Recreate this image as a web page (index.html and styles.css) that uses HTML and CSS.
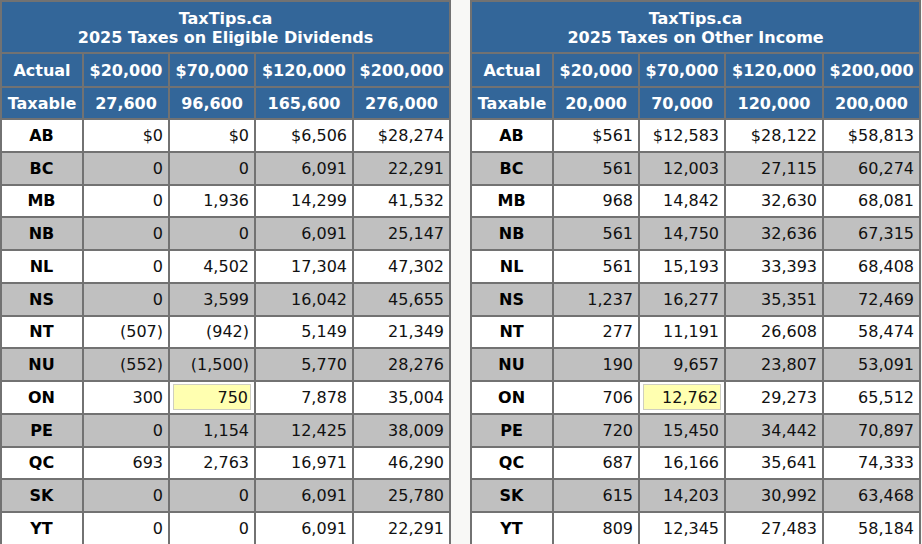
FILE: index.html
```html
<!DOCTYPE html>
<html>
<head>
<meta charset="utf-8">
<link rel="stylesheet" href="styles.css">
</head>
<body>
<div class="wrap">
<table class="tax">
<colgroup><col class="c1"><col class="c2"><col class="c3"><col class="c4"><col class="c5"></colgroup>
<tr class="title"><th colspan="5">TaxTips.ca<br>2025 Taxes on Eligible Dividends</th></tr>
<tr class="hrow r-actual"><th>Actual</th><th>$20,000</th><th>$70,000</th><th>$120,000</th><th>$200,000</th></tr>
<tr class="hrow r-taxable"><th>Taxable</th><th>27,600</th><th>96,600</th><th>165,600</th><th>276,000</th></tr>
<tr class="w"><td class="p">AB</td><td>$0</td><td>$0</td><td>$6,506</td><td>$28,274</td></tr>
<tr class="g"><td class="p">BC</td><td>0</td><td>0</td><td>6,091</td><td>22,291</td></tr>
<tr class="w"><td class="p">MB</td><td>0</td><td>1,936</td><td>14,299</td><td>41,532</td></tr>
<tr class="g"><td class="p">NB</td><td>0</td><td>0</td><td>6,091</td><td>25,147</td></tr>
<tr class="w"><td class="p">NL</td><td>0</td><td>4,502</td><td>17,304</td><td>47,302</td></tr>
<tr class="g"><td class="p">NS</td><td>0</td><td>3,599</td><td>16,042</td><td>45,655</td></tr>
<tr class="w"><td class="p">NT</td><td>(507)</td><td>(942)</td><td>5,149</td><td>21,349</td></tr>
<tr class="g"><td class="p">NU</td><td>(552)</td><td>(1,500)</td><td>5,770</td><td>28,276</td></tr>
<tr class="w"><td class="p">ON</td><td>300</td><td class="hl"><div class="mark">750</div></td><td>7,878</td><td>35,004</td></tr>
<tr class="g"><td class="p">PE</td><td>0</td><td>1,154</td><td>12,425</td><td>38,009</td></tr>
<tr class="w"><td class="p">QC</td><td>693</td><td>2,763</td><td>16,971</td><td>46,290</td></tr>
<tr class="g"><td class="p">SK</td><td>0</td><td>0</td><td>6,091</td><td>25,780</td></tr>
<tr class="w"><td class="p">YT</td><td>0</td><td>0</td><td>6,091</td><td>22,291</td></tr>
</table>
<table class="tax">
<colgroup><col class="c1"><col class="c2"><col class="c3"><col class="c4"><col class="c5"></colgroup>
<tr class="title"><th colspan="5">TaxTips.ca<br>2025 Taxes on Other Income</th></tr>
<tr class="hrow r-actual"><th>Actual</th><th>$20,000</th><th>$70,000</th><th>$120,000</th><th>$200,000</th></tr>
<tr class="hrow r-taxable"><th>Taxable</th><th>20,000</th><th>70,000</th><th>120,000</th><th>200,000</th></tr>
<tr class="w"><td class="p">AB</td><td>$561</td><td>$12,583</td><td>$28,122</td><td>$58,813</td></tr>
<tr class="g"><td class="p">BC</td><td>561</td><td>12,003</td><td>27,115</td><td>60,274</td></tr>
<tr class="w"><td class="p">MB</td><td>968</td><td>14,842</td><td>32,630</td><td>68,081</td></tr>
<tr class="g"><td class="p">NB</td><td>561</td><td>14,750</td><td>32,636</td><td>67,315</td></tr>
<tr class="w"><td class="p">NL</td><td>561</td><td>15,193</td><td>33,393</td><td>68,408</td></tr>
<tr class="g"><td class="p">NS</td><td>1,237</td><td>16,277</td><td>35,351</td><td>72,469</td></tr>
<tr class="w"><td class="p">NT</td><td>277</td><td>11,191</td><td>26,608</td><td>58,474</td></tr>
<tr class="g"><td class="p">NU</td><td>190</td><td>9,657</td><td>23,807</td><td>53,091</td></tr>
<tr class="w"><td class="p">ON</td><td>706</td><td class="hl"><div class="mark">12,762</div></td><td>29,273</td><td>65,512</td></tr>
<tr class="g"><td class="p">PE</td><td>720</td><td>15,450</td><td>34,442</td><td>70,897</td></tr>
<tr class="w"><td class="p">QC</td><td>687</td><td>16,166</td><td>35,641</td><td>74,333</td></tr>
<tr class="g"><td class="p">SK</td><td>615</td><td>14,203</td><td>30,992</td><td>63,468</td></tr>
<tr class="w"><td class="p">YT</td><td>809</td><td>12,345</td><td>27,483</td><td>58,184</td></tr>
</table>
</div>
</body>
</html>
```
FILE: styles.css
```css
html, body {
  margin: 0;
  padding: 0;
  background: #f8f8f6;
}
.wrap {
  display: flex;
  gap: 19px;
  font-family: "DejaVu Sans", Verdana, sans-serif;
  font-size: 16px;
}
.tax {
  border-collapse: collapse;
  table-layout: fixed;
  width: 449px;
  flex: none;
}
.c1 { width: 82px; }
.c2 { width: 86px; }
.c3 { width: 86px; }
.c4 { width: 98px; }
.c5 { width: 97px; }
.tax th, .tax td {
  border: 2px solid #727272;
  padding: 0 5px 0 4px;
  line-height: 19px;
  white-space: nowrap;
  overflow: hidden;
}
.tax th {
  background: #336699;
  color: #fff;
  font-weight: bold;
  text-align: center;
  padding: 0 2px;
}
.title th { padding-top: 2px; }
.title { height: 52px; }
.r-actual { height: 34px; }
.r-taxable { height: 32px; }
.w, .g { height: 32.75px; }
.w td { background: #fff; }
.g td { background: #c0c0c0; }
.tax td {
  text-align: right;
  color: #111;
}
.tax td.p {
  text-align: center;
  font-weight: bold;
  color: #000;
}
.tax td.hl {
  padding: 2px 3px;
}
.mark {
  background: #ffffb0;
  border: 1px solid #cfcfc0;
  text-align: right;
  padding: 3px 2px 2px 0;
}
```
